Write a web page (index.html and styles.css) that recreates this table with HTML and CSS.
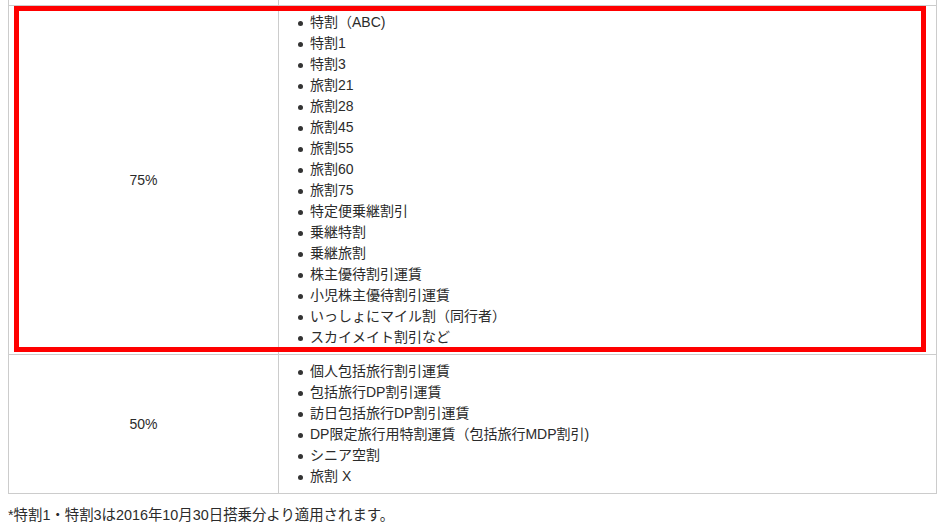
FILE: index.html
```html
<!DOCTYPE html>
<html lang="ja">
<head>
<meta charset="utf-8">
<link rel="stylesheet" href="styles.css">
</head>
<body>
<div class="wrap">
  <table class="fares">
    <colgroup><col class="c1"><col class="c2"></colgroup>
    <tr class="stub"><td></td><td></td></tr>
    <tr>
      <td class="rate">75%</td>
      <td>
        <ul>
          <li>特割（ABC)</li>
          <li>特割1</li>
          <li>特割3</li>
          <li>旅割21</li>
          <li>旅割28</li>
          <li>旅割45</li>
          <li>旅割55</li>
          <li>旅割60</li>
          <li>旅割75</li>
          <li>特定便乗継割引</li>
          <li>乗継特割</li>
          <li>乗継旅割</li>
          <li>株主優待割引運賃</li>
          <li>小児株主優待割引運賃</li>
          <li>いっしょにマイル割（同行者）</li>
          <li>スカイメイト割引など</li>
        </ul>
      </td>
    </tr>
    <tr>
      <td class="rate">50%</td>
      <td>
        <ul>
          <li>個人包括旅行割引運賃</li>
          <li>包括旅行DP割引運賃</li>
          <li>訪日包括旅行DP割引運賃</li>
          <li>DP限定旅行用特割運賃（包括旅行MDP割引)</li>
          <li>シニア空割</li>
          <li>旅割 X</li>
        </ul>
      </td>
    </tr>
  </table>
  <div class="highlight"></div>
</div>
<p class="note">*特割1・特割3は2016年10月30日搭乗分より適用されます。</p>
</body>
</html>
```

FILE: styles.css
```css
html, body {
  background: #fff;
}
body {
  margin: 0 8px;
  font-family: "Liberation Sans", "Noto Sans CJK JP", sans-serif;
  font-size: 14px;
  line-height: 21px;
  color: #2b2b2b;
}
.wrap {
  position: relative;
}
.fares {
  width: 100%;
  table-layout: fixed;
  border-collapse: separate;
  border-spacing: 0;
  border-left: 1px solid #ccc;
}
.c1 {
  width: 270px;
}
.fares td {
  border-right: 1px solid #ccc;
  border-bottom: 1px solid #ccc;
  padding: 6px 10px;
  vertical-align: top;
}
.fares .stub td {
  height: 5px;
  padding: 0;
}
.fares td.rate {
  text-align: center;
  vertical-align: middle;
}
.fares ul {
  margin: 0;
  padding-left: 21px;
  list-style: none;
}
.fares li {
  position: relative;
}
.fares li::before {
  content: "";
  position: absolute;
  left: -12px;
  top: 9px;
  width: 5px;
  height: 5px;
  border-radius: 50%;
  background: #333;
}
.highlight {
  position: absolute;
  left: 6px;
  top: 6px;
  width: 912px;
  height: 346px;
  box-sizing: border-box;
  border: 5px solid #f00;
  pointer-events: none;
}
.note {
  margin: 11px 0 0;
  font-size: 14.4px;
}
```
